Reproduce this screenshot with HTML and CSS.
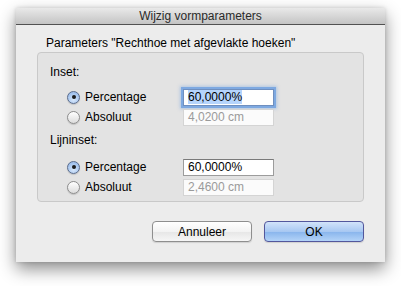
FILE: index.html
```html
<!DOCTYPE html>
<html lang="nl">
    <head>
        <meta charset="UTF-8">
        <title>Wijzig vormparameters</title>
        <link rel="stylesheet" href="styles.css">
    </head>
    <body>
        <div class="window">
            <div class="titlebar">Wijzig vormparameters</div>

            <div class="content">
                <p class="caption">Parameters "Rechthoe met afgevlakte hoeken"</p>

                <div class="group">
                    <p class="group-label">Inset:</p>
                    <div class="row">
                        <span class="radio checked"></span>
                        <span class="label">Percentage</span>
                        <span class="field focused"><span class="selection">60,0000%</span></span>
                    </div>
                    <div class="row">
                        <span class="radio"></span>
                        <span class="label">Absoluut</span>
                        <span class="field disabled">4,0200 cm</span>
                    </div>

                    <p class="group-label second">Lijninset:</p>
                    <div class="row">
                        <span class="radio checked"></span>
                        <span class="label">Percentage</span>
                        <span class="field">60,0000%</span>
                    </div>
                    <div class="row">
                        <span class="radio"></span>
                        <span class="label">Absoluut</span>
                        <span class="field disabled">2,4600 cm</span>
                    </div>
                </div>

                <div class="buttons">
                    <button class="btn">Annuleer</button>
                    <button class="btn default">OK</button>
                </div>
            </div>
        </div>
    </body>
</html>
```

FILE: styles.css
```css
* {
    margin: 0; padding: 0; box-sizing: border-box;
}

html, body {
    width: 100%;
    height: 100%;
    background-color: white;
    font-family: "Liberation Sans", sans-serif;
    font-size: 12px;
    color: black;
    overflow: hidden;
}

body {
    padding: 8px 0 0 16px;
}

.window {
    width: 369px;
    height: 254px;
    background-color: #ececec;
    box-shadow: 0 7px 16px rgba(0, 0, 0, 0.45), 0 0 4px rgba(0, 0, 0, 0.15);
    display: flex;
    flex-direction: column;
}

.titlebar {
    height: 17px;
    background: linear-gradient(#e9e9e9, #c4c4c4);
    border-bottom: 1px solid #515151;
    text-align: center;
    line-height: 16px;
    color: #2a2a2a;
    font-size: 12px;
}

.content {
    padding: 11px 21px 0 21px;
}

.caption {
    line-height: 15px;
    padding-left: 9px;
    margin-bottom: 1px;
}

.group {
    height: 150px;
    background-color: #e3e3e3;
    border: 1px solid #c9c9c9;
    border-radius: 4px;
    padding: 12px 0 0 12px;
}

.group-label {
    line-height: 15px;
    margin-bottom: 7px;
}

.group-label.second {
    margin-top: 6px;
    margin-bottom: 9px;
}

.row {
    height: 20px;
    display: flex;
    align-items: center;
    padding-left: 17px;
}

.radio {
    width: 13px;
    height: 13px;
    border-radius: 50%;
    border: 1px solid #8c8c8c;
    background: linear-gradient(#ffffff, #dcdcdc);
    box-shadow: 0 1px 1px rgba(0, 0, 0, 0.15);
    display: flex;
    align-items: center;
    justify-content: center;
}

.radio.checked {
    border-color: #5a6c8c;
    background: radial-gradient(circle at 50% 70%, #d8e8fb, #a9c7ef 60%, #8fb2e4);
}

.radio.checked::after {
    content: "";
    width: 4px;
    height: 4px;
    border-radius: 50%;
    background-color: #1b1b1b;
}

.label {
    width: 98px;
    margin-left: 5px;
}

.field {
    width: 91px;
    height: 17px;
    background-color: white;
    border: 1px solid #9c9c9c;
    border-top-color: #7a7a7a;
    padding-left: 4px;
    line-height: 15px;
}

.field.focused {
    box-shadow: 0 0 0 2px #7ea9e1, 0 0 3px 3px rgba(126, 169, 225, 0.5);
    border-color: #6f8fbf;
}

.field.disabled {
    color: #9a9a9a;
    border-color: #d4d4d4;
    background-color: #fbfbfb;
}

.selection {
    background-color: #b5d4fc;
}

.buttons {
    display: flex;
    justify-content: flex-end;
    gap: 12px;
    margin-top: 19px;
}

.btn {
    width: 100px;
    height: 21px;
    font-family: "Liberation Sans", sans-serif;
    font-size: 12px;
    color: black;
    border-radius: 4px;
    border: 1px solid #8e8e8e;
    background: linear-gradient(#ffffff, #f3f3f3 50%, #e6e6e6 51%, #f6f6f6);
    box-shadow: 0 1px 1px rgba(0, 0, 0, 0.12);
}

.btn.default {
    border-color: #53579c;
    background: linear-gradient(#d2e3fa, #a8c8f2 50%, #88b4ec 51%, #b3d3f8);
}
```
